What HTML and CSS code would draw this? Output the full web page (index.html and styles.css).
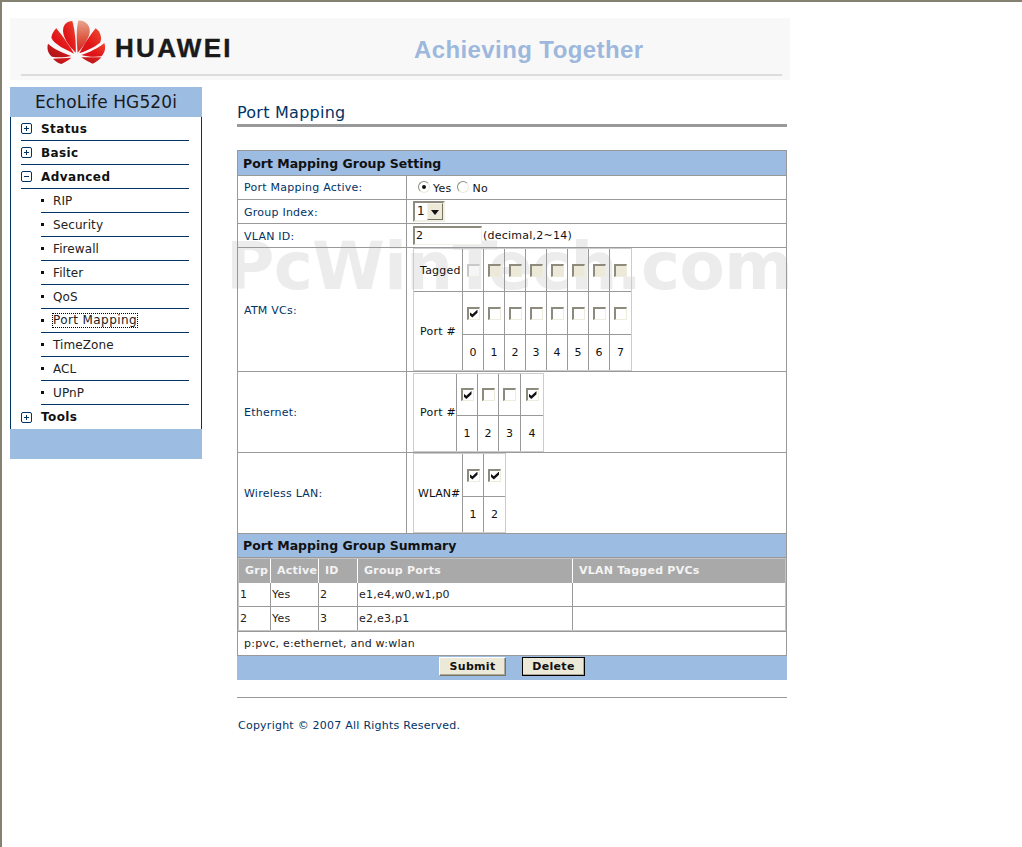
FILE: index.html
```html
<!DOCTYPE html>
<html lang="en">
<head>
<meta charset="utf-8">
<title>Port Mapping</title>
<link rel="stylesheet" href="styles.css">
</head>
<body>
<header class="banner">
  <svg class="logo" viewBox="0 0 198 156" aria-hidden="true">
    <defs>
      <linearGradient id="pt" x1="0" y1="0" x2="0" y2="1"><stop offset="0" stop-color="#e9a48f"/><stop offset="0.5" stop-color="#de5f48"/><stop offset="1" stop-color="#d81c1c"/></linearGradient>
      <linearGradient id="pr" x1="1" y1="0" x2="0" y2="1"><stop offset="0" stop-color="#ef4a30"/><stop offset="0.6" stop-color="#e01418"/><stop offset="1" stop-color="#d5141a"/></linearGradient>
      <linearGradient id="pd" x1="1" y1="0" x2="0" y2="1"><stop offset="0" stop-color="#e81c1c"/><stop offset="1" stop-color="#a81418"/></linearGradient>
    </defs>
    <path fill="url(#pt)" d="M101 110C97 70 97 35 103 14C125 12 140 30 137 50C132 75 112 98 101 110Z"/>
    <path fill="url(#pr)" d="M95 110C75 90 52 60 58 35C62 22 72 16 85 15C92 40 97 80 95 110Z"/>
    <path fill="url(#pr)" d="M106 112C120 85 140 55 155 37C170 47 175 68 168 80C150 95 125 105 106 112Z"/>
    <path fill="url(#pr)" d="M90 113C65 100 30 85 22 65C24 52 30 44 37 37C55 60 78 90 90 113Z"/>
    <path fill="url(#pr)" d="M112 117C135 110 165 95 181 81C186 95 183 110 172 121C150 124 130 122 112 117Z"/>
    <path fill="url(#pd)" d="M82 120C60 112 30 100 12 83C8 98 12 112 24 122C42 125 65 124 82 120Z"/>
    <path fill="url(#pd)" d="M112 124L172 124C165 132 155 139 146 143C134 138 122 131 112 124Z"/>
    <path fill="url(#pd)" d="M82 125L27 128C34 136 42 141 52 144C62 139 73 133 82 125Z"/>
  </svg>
  <span class="brand">HUAWEI</span>
  <span class="slogan">Achieving Together</span>
</header>

<div class="page">
  <nav class="side">
    <h2 class="model">EchoLife HG520i</h2>
    <ul class="menu">
      <li class="top"><svg class="tree" viewBox="0 0 11 11"><rect x=".5" y=".5" width="10" height="10" rx="1.5"/><path d="M3 5.5h5M5.5 3v5"/></svg>Status</li>
      <li class="top"><svg class="tree" viewBox="0 0 11 11"><rect x=".5" y=".5" width="10" height="10" rx="1.5"/><path d="M3 5.5h5M5.5 3v5"/></svg>Basic</li>
      <li class="top"><svg class="tree" viewBox="0 0 11 11"><rect x=".5" y=".5" width="10" height="10" rx="1.5"/><path d="M3 5.5h5"/></svg>Advanced</li>
      <li class="sub">RIP</li>
      <li class="sub">Security</li>
      <li class="sub">Firewall</li>
      <li class="sub">Filter</li>
      <li class="sub">QoS</li>
      <li class="sub"><span class="focus">Port Mapping</span></li>
      <li class="sub">TimeZone</li>
      <li class="sub">ACL</li>
      <li class="sub">UPnP</li>
      <li class="top last"><svg class="tree" viewBox="0 0 11 11"><rect x=".5" y=".5" width="10" height="10" rx="1.5"/><path d="M3 5.5h5M5.5 3v5"/></svg>Tools</li>
    </ul>
    <div class="side-foot"></div>
  </nav>

  <main class="content">
    <div class="watermark">PcWinTech.com</div>
    <h1 class="title">Port Mapping</h1>
    <table class="form">
      <colgroup><col class="col-lab"><col></colgroup>
      <tr class="r-band first"><th colspan="2" class="band">Port Mapping Group Setting</th></tr>
      <tr class="r-24">
        <td class="lab">Port Mapping Active:</td>
        <td class="val radios"><input type="radio" name="a" class="rd" checked><span class="rt">Yes</span><input type="radio" name="a" class="rd"><span class="rt">No</span></td>
      </tr>
      <tr class="r-24">
        <td class="lab low">Group Index:</td>
        <td class="val"><span class="select"><span class="sel-v">1</span><span class="sel-b"></span></span></td>
      </tr>
      <tr class="r-24">
        <td class="lab low">VLAN ID:</td>
        <td class="val"><input class="tx" type="text" value="2"><span class="hint">(decimal,2~14)</span></td>
      </tr>
      <tr class="r-atm">
        <td class="lab low">ATM VCs:</td>
        <td class="val">
          <table class="ports atm">
            <tr class="h43"><td class="c-h w49">Tagged</td>
              <td><input type="checkbox" class="ck ck-off"></td><td><input type="checkbox" class="ck ck-dis"></td><td><input type="checkbox" class="ck ck-dis"></td><td><input type="checkbox" class="ck ck-dis"></td><td><input type="checkbox" class="ck ck-dis"></td><td><input type="checkbox" class="ck ck-dis"></td><td><input type="checkbox" class="ck ck-dis"></td><td><input type="checkbox" class="ck ck-dis"></td></tr>
            <tr class="h43"><td class="c-h w49" rowspan="2">Port #</td>
              <td><input type="checkbox" class="ck" checked></td><td><input type="checkbox" class="ck"></td><td><input type="checkbox" class="ck"></td><td><input type="checkbox" class="ck"></td><td><input type="checkbox" class="ck"></td><td><input type="checkbox" class="ck"></td><td><input type="checkbox" class="ck"></td><td><input type="checkbox" class="ck"></td></tr>
            <tr class="h35 end"><td>0</td><td>1</td><td>2</td><td>3</td><td>4</td><td>5</td><td>6</td><td>7</td></tr>
          </table>
        </td>
      </tr>
      <tr class="r-81">
        <td class="lab">Ethernet:</td>
        <td class="val">
          <table class="ports eth">
            <tr class="h42"><td class="c-h w43" rowspan="2">Port #</td>
              <td><input type="checkbox" class="ck" checked></td><td><input type="checkbox" class="ck"></td><td class="w22"><input type="checkbox" class="ck"></td><td class="w22"><input type="checkbox" class="ck" checked></td></tr>
            <tr class="h35 end"><td>1</td><td>2</td><td>3</td><td>4</td></tr>
          </table>
        </td>
      </tr>
      <tr class="r-81">
        <td class="lab">Wireless LAN:</td>
        <td class="val">
          <table class="ports wlan">
            <tr class="h43"><td class="c-h w49" rowspan="2">WLAN#</td>
              <td><input type="checkbox" class="ck" checked></td><td><input type="checkbox" class="ck" checked></td></tr>
            <tr class="h35 end"><td>1</td><td>2</td></tr>
          </table>
        </td>
      </tr>
      <tr class="r-band"><th colspan="2" class="band">Port Mapping Group Summary</th></tr>
      <tr>
        <td colspan="2" class="flush">
          <table class="summary">
            <tr class="s-head"><th class="s1">Grp</th><th class="s2">Active</th><th class="s3">ID</th><th class="s4">Group Ports</th><th>VLAN Tagged PVCs</th></tr>
            <tr><td>1</td><td>Yes</td><td>2</td><td>e1,e4,w0,w1,p0</td><td></td></tr>
            <tr class="end"><td>2</td><td>Yes</td><td>3</td><td>e2,e3,p1</td><td></td></tr>
          </table>
        </td>
      </tr>
      <tr class="r-24"><td colspan="2" class="note">p:pvc, e:ethernet, and w:wlan</td></tr>
      <tr class="r-actions">
        <td colspan="2" class="actions"><button class="btn" type="button">Submit</button><button class="btn btn-def" type="button">Delete</button></td>
      </tr>
    </table>
    <hr class="rule">
    <p class="copy">Copyright © 2007 All Rights Reserved.</p>
  </main>
</div>
</body>
</html>
```
FILE: styles.css
```css
* { box-sizing: border-box; }
html, body { height: 100%; margin: 0; overflow: hidden; }
body {
  border-top: 2px solid #848170;
  border-left: 2px solid #848170;
  background: #fff;
  padding: 16px 0 0 8px;
  font: 11px "DejaVu Sans", Verdana, sans-serif;
  letter-spacing: .24px;
  color: #111;
}

.banner {
  width: 780px;
  height: 62px;
  background: #f8f8f8;
  display: flex;
  align-items: flex-start;
  position: relative;
}
.banner::after {
  content: "";
  position: absolute;
  left: 11px;
  top: 56px;
  width: 761px;
  height: 2px;
  background: #dcdcdc;
}
.logo { width: 66px; height: 52px; margin: -2px 0 0 34px; flex: none; }
.brand {
  font: bold 26px "Liberation Sans", Arial, sans-serif;
  color: #1a1a1a;
  margin: 17px 0 0 5px;
  line-height: 26px;
  width: 116px;
  letter-spacing: 2.3px;
  -webkit-text-stroke: .4px #1a1a1a;
}
.slogan {
  font: bold 24px "Liberation Sans", Arial, sans-serif;
  color: #9db8dc;
  margin: 18px 0 0 183px;
  line-height: 28px;
  letter-spacing: .4px;
}

.page { display: flex; margin-top: 7px; align-items: flex-start; }

.side { width: 192px; flex: none; }
.model {
  margin: 0;
  height: 30px;
  background: #9cbce2;
  font: 400 17px/30px "DejaVu Sans", Verdana, sans-serif;
  letter-spacing: .1px;
  text-align: center;
  color: #1a1a1a;
}
.menu {
  list-style: none;
  margin: 0;
  padding: 0 0 0 10px;
  width: 192px;
  border-left: 1px solid #003366;
  border-right: 1px solid #003366;
}
.menu li {
  height: 24px;
  border-bottom: 1px solid #003366;
  margin-right: 12px;
  display: flex;
  align-items: center;
}
.menu .last { border-bottom: 0; }
.top { font-weight: 700; font-size: 12px; color: #111; letter-spacing: .4px; }
.tree { width: 11px; height: 11px; margin-right: 9px; flex: none; fill: none; stroke: #003366; stroke-width: 1; }
.sub { margin-left: 20px; padding-left: 12px; position: relative; font-size: 12px; color: #222; letter-spacing: .1px; }
.sub::before {
  content: "";
  position: absolute;
  left: 0;
  top: 10px;
  width: 3px;
  height: 3px;
  background: #111;
}
.focus { outline: 1px dotted #000; outline-offset: 0; line-height: 13px; letter-spacing: .4px; }
.side-foot { height: 30px; background: #9cbce2; }

.content {
  width: 550px;
  margin-left: 35px;
  position: relative;
  isolation: isolate;
}
.watermark {
  position: absolute;
  left: -11px;
  top: 145px;
  z-index: -1;
  white-space: nowrap;
  font: bold 66px/70px "DejaVu Sans", Verdana, sans-serif;
  letter-spacing: -.7px;
  color: #ececec;
}
.title {
  margin: 0 0 23px;
  height: 40px;
  padding-top: 16px;
  border-bottom: 3px solid #999;
  font: 400 16px/19px "DejaVu Sans", Verdana, sans-serif;
  letter-spacing: .25px;
  color: #003366;
}

.form { width: 550px; border-collapse: collapse; table-layout: fixed; }
.col-lab { width: 169px; }
.form > tbody > tr > td, .form > tbody > tr > th { border: 1px solid #999; padding: 0; }
.band {
  background: #9cbce2;
  text-align: left;
  padding-left: 5px !important;
  font-size: 12.5px;
  font-weight: 700;
  letter-spacing: 0;
  color: #111;
}
.r-band { height: 24px; }
.r-band.first { height: 25px; }
.r-24 { height: 24px; }
.r-atm { height: 124px; }
.r-81 { height: 81px; }
.r-actions { height: 24px; }
.lab { padding-left: 6px !important; color: #003366; }
.form > tbody > tr > td.low { padding-top: 2px; }
.val { padding-left: 6px !important; vertical-align: top; }
.r-24 .val { vertical-align: middle; }
.note { padding-left: 6px !important; color: #222; }

.rd {
  appearance: none;
  width: 12px;
  height: 12px;
  margin: 0 3px 2px 5px;
  border-radius: 50%;
  border: 1px solid #8d8b7e;
  border-right-color: #ecead8;
  border-bottom-color: #ecead8;
  background: #fff;
  vertical-align: middle;
  position: relative;
}
.rd:checked::after {
  content: "";
  position: absolute;
  left: 3px;
  top: 3px;
  width: 4px;
  height: 4px;
  border-radius: 50%;
  background: #111;
}
.rt { margin-right: 1px; position: relative; top: 1px; }

.select {
  display: inline-flex;
  width: 32px;
  height: 21px;
  border: 2px solid #8d8b7e;
  border-right-color: #f2f0e4;
  border-bottom-color: #f2f0e4;
  background: #fff;
  font-size: 12px;
  vertical-align: middle;
}
.sel-v { flex: 1; padding-left: 2px; line-height: 17px; color: #111; }
.sel-b {
  width: 16px;
  background: #ece9d8;
  border: 1px solid;
  border-color: #f6f4ea #77755f #77755f #f6f4ea;
  position: relative;
}
.sel-b::after {
  content: "";
  position: absolute;
  left: 3px;
  top: 6px;
  border: 4px solid transparent;
  border-top: 5px solid #111;
  border-bottom: 0;
}
.tx {
  width: 69px;
  height: 19px;
  border: 2px solid #8d8b7e;
  border-right: 1px solid #f2f0e4;
  border-bottom: 1px solid #f2f0e4;
  padding: 0 1px 2px;
  font: 11px "DejaVu Sans", Verdana, sans-serif;
  color: #111;
  vertical-align: middle;
  background: #fff;
  margin: 0;
}
.hint { margin-left: 1px; }

.ports {
  border-collapse: separate;
  border-spacing: 0;
  border: 1px solid #ccc;
  table-layout: fixed;
  text-align: center;
}
.eth { margin-top: 1px; }
.ports td { padding: 0; width: 21px; border-right: 1px solid #999; border-bottom: 1px solid #999; }
.ports tr.end td { border-bottom: 0; }
.ports td:last-child { border-right: 0; }
.ports td.c-h { border-bottom: 0; text-align: left; padding-left: 6px; }
.wlan td.c-h { padding-left: 4px; letter-spacing: 0; }
.atm tr:first-child td.c-h { border-bottom: 1px solid #999; }
.ports .w49 { width: 49px; }
.ports .w43 { width: 43px; }
.ports .w22 { width: 22px; }
.h43 { height: 43px; }
.h42 { height: 42px; }
.h35 { height: 35px; }

.ck {
  appearance: none;
  display: block;
  width: 13px;
  height: 13px;
  margin: 0 auto;
  border: 2px solid #8d8b7e;
  border-right: 1px solid #eeecdc;
  border-bottom: 1px solid #eeecdc;
  background: #fff;
  position: relative;
}
.ck-dis { background: #ece9d8; }
.ck-off { border-color: #c8c8c8 #eeecdc #eeecdc #c8c8c8; background: #f6f6f6; }
.ck:checked::after {
  content: "";
  position: absolute;
  left: 1px;
  top: 1px;
  width: 8px;
  height: 8px;
  background: #111;
  clip-path: polygon(0 30%, 36% 60%, 100% 0, 100% 40%, 36% 100%, 0 70%);
}

.flush { padding: 0 !important; }
.summary {
  width: 100%;
  border-collapse: separate;
  border-spacing: 0;
  border: 1px solid #c4c4c4;
  table-layout: fixed;
}
.summary th {
  height: 24px;
  background: #a9a9a9;
  color: #f4f4f4;
  font-size: 11px;
  text-align: left;
  padding: 0 0 1px 6px;
  border-right: 1px solid #fff;
}
.summary th:last-child, .summary td:last-child { border-right: 0; }
.summary td {
  height: 24px;
  padding: 0 0 0 1px;
  border-right: 1px solid #999;
  border-bottom: 1px solid #999;
  color: #222;
}
.summary .end td { border-bottom: 0; height: 23px; }
.s1 { width: 32px; }
.s2 { width: 48px; }
.s3 { width: 39px; }
.s4 { width: 215px; }

.form > tbody > tr > td.actions {
  background: #9cbce2;
  padding: 0 0 2px 201px;
  vertical-align: middle;
  border-color: #999 #9cbce2 #9cbce2;
}
.btn {
  width: 67px;
  height: 19px;
  padding: 0;
  margin: 0 16px 0 0;
  background: #ece9d8;
  border: 1px solid;
  border-color: #fff #77755f #77755f #fff;
  font: bold 11px "DejaVu Sans", Verdana, sans-serif;
  letter-spacing: .3px;
  color: #111;
  box-shadow: inset -1px -1px 0 #aca899;
  vertical-align: middle;
}
.btn-def { width: 63px; border-color: #000; box-shadow: inset -1px -1px 0 #aca899; }

.rule { height: 1px; border: 0; background: #999; margin: 17px 0 0; }
.copy { margin: 21px 0 0 1px; color: #003366; line-height: 13px; }
```
